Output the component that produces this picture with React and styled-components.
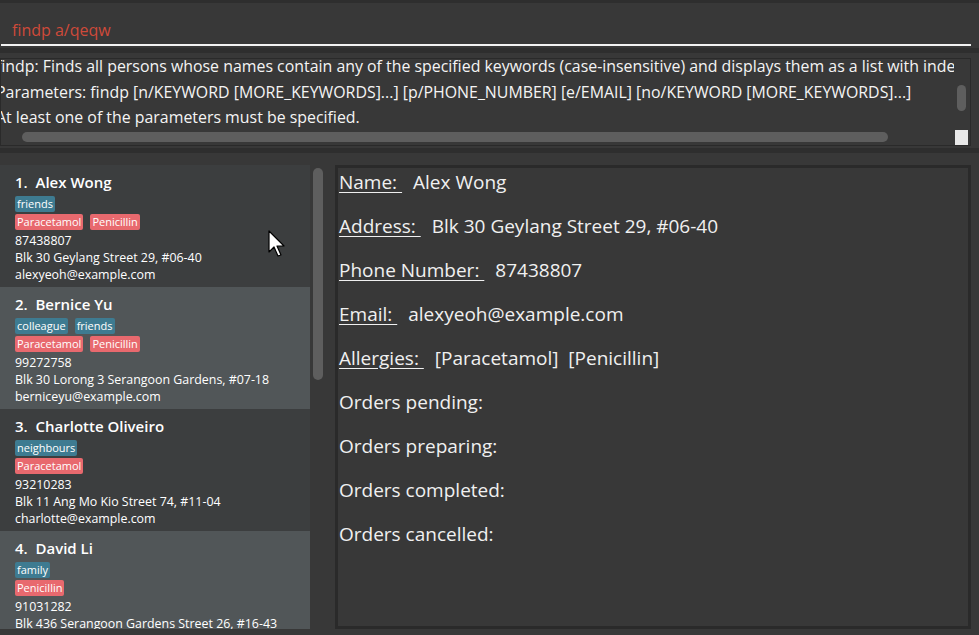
import React from 'react';
import styled, { createGlobalStyle } from 'styled-components';

const persons = [
    {
        name: 'Alex Wong',
        tags: ['friends'],
        allergies: ['Paracetamol', 'Penicillin'],
        phone: '87438807',
        address: 'Blk 30 Geylang Street 29, #06-40',
        email: 'alexyeoh@example.com',
    },
    {
        name: 'Bernice Yu',
        tags: ['colleague', 'friends'],
        allergies: ['Paracetamol', 'Penicillin'],
        phone: '99272758',
        address: 'Blk 30 Lorong 3 Serangoon Gardens, #07-18',
        email: 'berniceyu@example.com',
    },
    {
        name: 'Charlotte Oliveiro',
        tags: ['neighbours'],
        allergies: ['Paracetamol'],
        phone: '93210283',
        address: 'Blk 11 Ang Mo Kio Street 74, #11-04',
        email: 'charlotte@example.com',
    },
    {
        name: 'David Li',
        tags: ['family'],
        allergies: ['Penicillin'],
        phone: '91031282',
        address: 'Blk 436 Serangoon Gardens Street 26, #16-43',
        email: 'lidavid@example.com',
    },
];

const resultText = [
    'findp: Finds all persons whose names contain any of the specified keywords (case-insensitive) and displays them as a list with index numbers.',
    'Parameters: findp [n/KEYWORD [MORE_KEYWORDS]...] [p/PHONE_NUMBER] [e/EMAIL] [no/KEYWORD [MORE_KEYWORDS]...]',
    'At least one of the parameters must be specified.',
];

const App = () => {
    const selected = persons[0];
    return (
        <>
            <GlobalStyle />
            <Window>
                <CommandBox>
                    <CommandText>findp a/qeqw</CommandText>
                </CommandBox>
                <Divider />
                <ResultBox>
                    <ResultText>
                        {resultText.map((line) => (
                            <div key={line}>{line}</div>
                        ))}
                    </ResultText>
                    <VTrack>
                        <Thumb />
                    </VTrack>
                    <HTrack>
                        <Thumb />
                    </HTrack>
                    <Corner />
                </ResultBox>
                <Divider />
                <Panels>
                    <ListArea>
                        <PersonList>
                            {persons.map((p, i) => (
                                <Card key={p.name} odd={i % 2 === 1}>
                                    <CardName>{i + 1}.&nbsp;&nbsp;{p.name}</CardName>
                                    <TagRow>
                                        {p.tags.map((t) => (
                                            <Tag key={t}>{t}</Tag>
                                        ))}
                                    </TagRow>
                                    <TagRow>
                                        {p.allergies.map((a) => (
                                            <Tag key={a} allergy>{a}</Tag>
                                        ))}
                                    </TagRow>
                                    <CardLine>{p.phone}</CardLine>
                                    <CardLine>{p.address}</CardLine>
                                    <CardLine>{p.email}</CardLine>
                                </Card>
                            ))}
                        </PersonList>
                        <ListScroll>
                            <Thumb />
                        </ListScroll>
                    </ListArea>
                    <Detail>
                        <DetailRow>
                            <Label>Name:&nbsp;</Label>
                            <Value>{selected.name}</Value>
                        </DetailRow>
                        <DetailRow>
                            <Label>Address:&nbsp;</Label>
                            <Value>{selected.address}</Value>
                        </DetailRow>
                        <DetailRow>
                            <Label>Phone Number:&nbsp;</Label>
                            <Value>{selected.phone}</Value>
                        </DetailRow>
                        <DetailRow>
                            <Label>Email:&nbsp;</Label>
                            <Value>{selected.email}</Value>
                        </DetailRow>
                        <DetailRow>
                            <Label>Allergies:&nbsp;</Label>
                            <Value>
                                {selected.allergies.map((a) => `[${a}]`).join('  ')}
                            </Value>
                        </DetailRow>
                        <DetailRow>Orders pending:</DetailRow>
                        <DetailRow>Orders preparing:</DetailRow>
                        <DetailRow>Orders completed:</DetailRow>
                        <DetailRow>Orders cancelled:</DetailRow>
                    </Detail>
                </Panels>
                <Cursor viewBox="0 0 18 28">
                    <path
                        d="M1 1 L1 22 L6 17 L10 26 L13 25 L9 16 L16 16 Z"
                        fill="#fff"
                        stroke="#000"
                        strokeWidth="1.2"
                        strokeLinejoin="round"
                    />
                </Cursor>
            </Window>
        </>
    );
};

const GlobalStyle = createGlobalStyle`
    body {
        margin: 0;
        background: #383838;
        font-family: "Open Sans", "Noto Sans", sans-serif;
        color: #fff;
    }
`;

const Window = styled.div`
    position: relative;
    width: 979px;
    height: 635px;
    overflow: hidden;
    display: flex;
    flex-direction: column;
    background: #383838;
    border-top: 3px solid #2e2e2e;
    box-sizing: border-box;
`;

const CommandBox = styled.div`
    height: 43px;
    box-sizing: border-box;
    margin: 0 8px 0 1px;
    display: flex;
    align-items: center;
    padding: 13px 0 0 11px;
    border-bottom: 2px solid #f2f2f2;
    flex-shrink: 0;
`;

const CommandText = styled.span`
    color: #cf4a3a;
    font-size: 16px;
`;

const Divider = styled.div`
    height: 5px;
    margin: 2px 0 5px;
    background: #2e2e2e;
    flex-shrink: 0;
`;

const ResultBox = styled.div`
    height: 86px;
    flex-shrink: 0;
    margin-right: 8px;
    border: 1px solid #2a2a2a;
    display: grid;
    grid-template-columns: 1fr 16px;
    grid-template-rows: 1fr 16px;
    overflow: hidden;
`;

const ResultText = styled.div`
    overflow: hidden;
    white-space: pre;
    font-size: 15.9px;
    line-height: 25.5px;
    color: #f4f4f4;
    margin: -5px 0 0 -5px;
`;

const Thumb = styled.div`
    background: #5e5e5e;
    border-radius: 5px;
`;

const VTrack = styled.div`
    display: flex;
    flex-direction: column;
    padding: 26px 4px 16px 3px;
    & > div {
        height: 26px;
    }
`;

const HTrack = styled.div`
    display: flex;
    align-items: center;
    padding: 0 66px 0 21px;
    & > div {
        flex: 1;
        height: 10px;
    }
`;

const Corner = styled.div`
    background: #e9e9e9;
    margin: 1px 2px 0 1px;
`;

const Panels = styled.div`
    flex: 1;
    display: flex;
    padding: 7px 8px 6px 0;
    gap: 11px;
    min-height: 0;
`;

const ListArea = styled.div`
    width: 324px;
    display: flex;
    gap: 3px;
    min-height: 0;
`;

const PersonList = styled.div`
    width: 310px;
    overflow: hidden;
`;

const ListScroll = styled.div`
    width: 10px;
    display: flex;
    flex-direction: column;
    padding-top: 3px;
    & > div {
        height: 212px;
    }
`;

const Card = styled.div`
    height: 122px;
    box-sizing: border-box;
    padding: 7px 10px 0 15px;
    background: ${(p) => (p.odd ? '#515658' : '#3c3e3f')};
    display: flex;
    flex-direction: column;
`;

const CardName = styled.div`
    font-size: 15px;
    font-weight: 600;
    line-height: 21px;
    color: #fff;
    margin-bottom: 3px;
`;

const TagRow = styled.div`
    display: flex;
    gap: 7px;
    margin-bottom: 2px;
`;

const Tag = styled.span`
    background: ${(p) => (p.allergy ? '#e8696e' : '#3e7b91')};
    color: #fff;
    font-size: 11px;
    line-height: 16px;
    padding: 0 2px;
    border-radius: 2px;
`;

const CardLine = styled.div`
    font-size: 12.4px;
    line-height: 17px;
    color: #fff;
    white-space: nowrap;
`;

const Detail = styled.div`
    flex: 1;
    border: 3px solid #2a2a2a;
    padding: 1px 0 0 1px;
    display: flex;
    flex-direction: column;
    gap: 18px;
`;

const DetailRow = styled.div`
    height: 26px;
    display: flex;
    align-items: center;
    gap: 11px;
    font-size: 19px;
    color: #f0f0f0;
`;

const Label = styled.span`
    text-decoration: underline;
    text-underline-offset: 3px;
`;

const Value = styled.span`
    white-space: pre;
`;

const Cursor = styled.svg`
    position: absolute;
    left: 268px;
    top: 227px;
    width: 18px;
    height: 28px;
`;

export default App;
